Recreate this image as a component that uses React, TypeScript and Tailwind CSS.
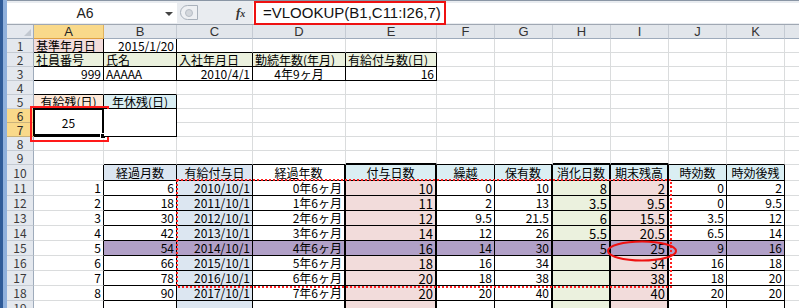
type Cell = { v?: string; a?: "l" | "c" | "r"; bg?: string; big?: boolean };

const PINK = "bg-[#f2dcdb]";
const GREEN = "bg-[#ebf1de]";
const LBLUE = "bg-[#dce6f1]";
const HBLUE = "bg-[#daeef3]";
const PEACH = "bg-[#fde9d9]";
const PURPLE = "bg-[#b1a0c7]";

const COLS = ["A", "B", "C", "D", "E", "F", "G", "H", "I", "J", "K", ""];

// sheet content, row number -> cells A..L
const rows: Record<number, Cell[]> = {
  1: [{ v: "基準年月日", a: "l", bg: PINK }, { v: "2015/1/20", a: "r" }],
  2: [
    { v: "社員番号", a: "l", bg: GREEN },
    { v: "氏名", a: "l", bg: GREEN },
    { v: "入社年月日", a: "l", bg: GREEN },
    { v: "勤続年数(年月)", a: "l", bg: GREEN },
    { v: "有給付与数(日)", a: "l", bg: GREEN },
  ],
  3: [
    { v: "999", a: "r" },
    { v: "AAAAA", a: "l" },
    { v: "2010/4/1", a: "r" },
    { v: "4年9ヶ月", a: "c" },
    { v: "16", a: "r" },
  ],
  5: [
    { v: "有給残(日)", a: "c", bg: PEACH },
    { v: "年休残(日)", a: "c", bg: HBLUE },
  ],
  6: [{ v: "25", a: "c" }, {}],
  10: [
    {},
    { v: "経過月数", a: "c", bg: LBLUE },
    { v: "有給付与日", a: "c", bg: LBLUE },
    { v: "経過年数", a: "c" },
    { v: "付与日数", a: "c", bg: HBLUE },
    { v: "繰越", a: "c", bg: HBLUE },
    { v: "保有数", a: "c", bg: HBLUE },
    { v: "消化日数", a: "c", bg: HBLUE },
    { v: "期末残高", a: "c", bg: HBLUE },
    { v: "時効数", a: "c", bg: HBLUE },
    { v: "時効後残", a: "c", bg: HBLUE },
  ],
};

const data = [
  ["1", "6", "2010/10/1", "0年6ヶ月", "10", "0", "10", "8", "2", "0", "2"],
  ["2", "18", "2011/10/1", "1年6ヶ月", "11", "2", "13", "3.5", "9.5", "0", "9.5"],
  ["3", "30", "2012/10/1", "2年6ヶ月", "12", "9.5", "21.5", "6", "15.5", "3.5", "12"],
  ["4", "42", "2013/10/1", "3年6ヶ月", "14", "12", "26", "5.5", "20.5", "6.5", "14"],
  ["5", "54", "2014/10/1", "4年6ヶ月", "16", "14", "30", "5", "25", "9", "16"],
  ["6", "66", "2015/10/1", "5年6ヶ月", "18", "16", "34", "", "34", "16", "18"],
  ["7", "78", "2016/10/1", "6年6ヶ月", "20", "18", "38", "", "38", "18", "20"],
  ["8", "90", "2017/10/1", "7年6ヶ月", "20", "20", "40", "", "40", "20", "20"],
  ["", "", "", "", "", "", "", "", "", "", ""],
];

data.forEach((d, i) => {
  const r = 11 + i;
  const purple = r === 15;
  rows[r] = d.map((v, j) => {
    const c = j + 1;
    let bg: string | undefined;
    if (c === 3) bg = LBLUE;
    if (c === 5 || c === 9) bg = PINK;
    if (c === 8) bg = GREEN;
    if (purple && c >= 2) bg = PURPLE;
    return { v, a: "r", bg, big: c === 5 || c === 8 || c === 9 };
  });
});

const bordered = (r: number, c: number) =>
  (r === 1 && c >= 1 && c <= 2) ||
  ((r === 2 || r === 3) && c >= 1 && c <= 5) ||
  (r >= 5 && r <= 7 && c >= 1 && c <= 2) ||
  (r >= 10 && r <= 19 && c >= 2 && c <= 11);

const thickRight = (r: number, c: number) => r >= 10 && [4, 5, 7, 8, 9].includes(c);
const thickBottom = (r: number, c: number) => r === 9 && [5, 8, 9].includes(c);

function edges(r: number, c: number, lastRow: number) {
  let right = "border-r border-r-[#dadcdd]";
  if (c === 12) right = "";
  else if (thickRight(r, c)) right = "border-r-2 border-r-black";
  else if (bordered(r, c) || bordered(r, c + 1)) right = "border-r border-r-black";
  let bottom = "border-b border-b-[#dadcdd]";
  if (thickBottom(lastRow, c)) bottom = "border-b-2 border-b-black";
  else if (bordered(lastRow, c) || bordered(lastRow + 1, c)) bottom = "border-b border-b-black";
  return right + " " + bottom;
}

const alignCls = { l: "justify-start pl-[2px]", c: "justify-center", r: "justify-end pr-[2px]" };

function SheetCell({ r, c }: { r: number; c: number }) {
  const cell = rows[r]?.[c - 1] ?? {};
  const merged = r === 6 && (c === 1 || c === 2);
  const cls = [
    "flex items-center overflow-visible whitespace-nowrap text-[#000]",
    merged ? "row-span-2 relative" : "",
    cell.bg ?? "bg-white",
    alignCls[cell.a ?? "l"],
    cell.big ? "text-[13px]" : "text-[12px]",
    edges(r, c, merged ? 7 : r),
  ].join(" ");
  return (
    <div className={cls}>
      {cell.v ? <span className="leading-none">{cell.v}</span> : null}
      {merged && c === 1 && (
        <>
          <div className="absolute -left-[1px] -top-[1px] -right-[1px] bottom-0 border-2 border-black" />
          <div className="absolute -left-[4px] -top-[3px] -right-[6px] -bottom-[6px] border-2 border-[#ff1a1a]" />
          <div className="absolute -right-[3px] -bottom-[3px] w-[6px] h-[6px] bg-black border border-white" />
        </>
      )}
    </div>
  );
}

function RowHeader({ r }: { r: number }) {
  const sel = r === 6 || r === 7;
  return (
    <div
      className={
        "flex items-center justify-center text-[12px] leading-none border-r border-b " +
        (sel
          ? "bg-[#f9d98a] text-[#2a2a2a] border-r-[#e3a94f] border-b-[#c9b27c]"
          : "bg-[#e4e8ee] text-[#3a3a3a] border-r-[#9eabbb] border-b-[#c5cbd3]")
      }
    >
      {r}
    </div>
  );
}

export default function App() {
  const sheetRows = Array.from({ length: 19 }, (_, i) => i + 1);
  return (
    <div className="w-[799px] h-[308px] overflow-hidden flex bg-white font-['MS_PGothic','Noto_Sans_CJK_JP',sans-serif]">
      <div className="w-[3px] bg-[#2f5b98]" />
      <div className="w-[4px] bg-[#8fb0dc]" />
      <div className="flex-1 flex flex-col">
        {/* ribbon bottom edge */}
        <div className="h-[3px] bg-[#e3e7ec] border-b border-b-[#8a96a5] flex">
          <div className="w-[442px] border-r border-r-[#8a96a5]" />
          <div className="w-[292px] border-r border-r-[#8a96a5]" />
        </div>
        {/* formula bar */}
        <div className="h-[24px] flex bg-[#e9ecf0] border-b border-b-[#a0a8b3]">
          <div className="w-[170px] mt-[2px] mb-[1px] bg-white flex items-center relative">
            <span className="w-[156px] text-center text-[14px] font-['Liberation_Sans',sans-serif] text-[#222]">A6</span>
            <div className="absolute right-[4px] top-[9px] w-0 h-0 border-l-[4px] border-r-[4px] border-t-[4px] border-l-transparent border-r-transparent border-t-[#444]" />
          </div>
          <div className="w-[76px] flex items-center">
            <div className="ml-[3px] w-[18px] h-[15px] rounded-l-full border border-[#a9b1bb] bg-[#eef0f3] flex items-center justify-center">
              <div className="w-[8px] h-[8px] rounded-full bg-[#d3d7dc] border border-[#b8bec6]" />
            </div>
            <span className="ml-[38px] text-[13px] leading-none italic font-bold font-['Liberation_Serif',serif] text-[#333]">
              f<span className="text-[10px]">x</span>
            </span>
          </div>
          <div className="flex-1 mt-[2px] mb-[1px] bg-white relative flex items-center">
            <div className="absolute left-[1px] -top-[2px] w-[192px] h-[24px] border-2 border-[#ee1111]" />
            <span className="ml-[10px] text-[15px] font-['Liberation_Sans',sans-serif] text-[#111]">
              =VLOOKUP(B1,C11:I26,7)
            </span>
          </div>
        </div>
        <div className="h-[2px] bg-[#f2f4f7]" />
        {/* sheet */}
        <div className="relative grid grid-cols-[27px_70px_73px_76px_93px_91px_58px_58px_58px_58px_58px_58px_14px] grid-rows-[14px_repeat(9,14px)_16px_repeat(8,15px)_15px]">
          <div className="relative bg-[#e4e8ee] border-r border-b border-r-[#9eabbb] border-b-[#9eabbb]">
            <div className="absolute right-[2px] bottom-[2px] w-0 h-0 border-b-[7px] border-l-[7px] border-b-[#c2c8d0] border-l-transparent" />
          </div>
          {COLS.map((h, i) => (
            <div
              key={i}
              className={
                "flex items-center justify-center text-[13px] leading-none font-['Liberation_Sans',sans-serif] border-b " +
                (i === 11 ? "" : "border-r ") +
                (i === 0
                  ? "bg-[#f9d98a] text-[#222] border-r-[#e0b25c] border-b-[#e0a040]"
                  : "bg-[#e2e6eb] text-[#333] border-r-[#c5cbd3] border-b-[#9eabbb]")
              }
            >
              {h}
            </div>
          ))}
          {sheetRows.map((r) => (
            <div key={r} className="contents">
              <RowHeader r={r} />
              {Array.from({ length: 12 }, (_, i) => i + 1).map((c) =>
                r === 7 && (c === 1 || c === 2) ? null : <SheetCell key={c} r={r} c={c} />
              )}
            </div>
          ))}
          {/* copy range marquee and annotation */}
          <svg className="absolute left-0 top-0 pointer-events-none" width="792" height="278">
            <rect x="170" y="155" width="494" height="107" fill="none" stroke="#ff2020" strokeWidth="2" strokeDasharray="2 2" />
            <ellipse cx="635" cy="226" rx="34" ry="9.5" fill="none" stroke="#ee1111" strokeWidth="2" />
          </svg>
        </div>
      </div>
    </div>
  );
}
